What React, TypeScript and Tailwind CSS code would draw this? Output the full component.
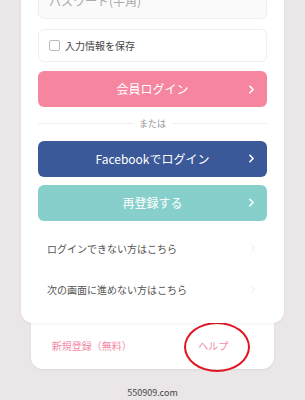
import { ChevronRight } from 'lucide-react';

const jp = { fontFamily: '"Noto Sans CJK JP", "Noto Sans", sans-serif' };

function ActionButton({ label, color }: { label: string; color: string }) {
  return (
    <button className={`relative flex h-[36px] w-full items-center justify-center rounded-[6px] text-[12px] text-white ${color}`}>
      {label}
      <ChevronRight className="absolute right-[9px] h-[13px] w-[13px]" strokeWidth={3} />
    </button>
  );
}

function LinkRow({ label }: { label: string }) {
  return (
    <div className="flex h-[41px] items-center justify-between pl-[9px] pr-[8px] text-[10px] text-[#555]">
      <span>{label}</span>
      <ChevronRight className="h-[12px] w-[12px] text-[#ddd]" strokeWidth={1.5} />
    </div>
  );
}

export default function App() {
  return (
    <div className="relative h-[400px] overflow-hidden bg-[#ebe7e8]" style={jp}>
      {/* Login card */}
      <div className="relative z-10 mx-[21px] -mt-[30px] rounded-b-[12px] bg-white px-[17px] pt-[13px] pb-[13px] shadow-[0_1px_3px_rgba(0,0,0,0.06)]">
        <div className="flex h-[36px] items-center rounded-[6px] border border-[#eee] bg-[#fafafa] px-[10px] text-[12px] text-[#aaa]">
          パスワード(半角)
        </div>

        <label className="mt-[10px] flex h-[33px] items-center gap-[5px] rounded-[6px] border border-[#eee] px-[10px] text-[10px] text-[#444]">
          <span className="h-[11px] w-[11px] rounded-[2px] border border-[#bbb] bg-white" />
          入力情報を保存
        </label>

        <div className="mt-[9px]">
          <ActionButton label="会員ログイン" color="bg-[#f6869f]" />
        </div>

        <div className="my-[10px] flex items-center gap-[6px] text-[9px] text-[#999]">
          <div className="h-px flex-1 bg-[#eee]" />
          <span>または</span>
          <div className="h-px flex-1 bg-[#eee]" />
        </div>

        <div className="flex flex-col gap-[8px]">
          <ActionButton label="Facebookでログイン" color="bg-[#3b5998]" />
          <ActionButton label="再登録する" color="bg-[#87cfcb]" />
        </div>

        <div className="mt-[7px]">
          <LinkRow label="ログインできない方はこちら" />
          <LinkRow label="次の画面に進めない方はこちら" />
        </div>
      </div>

      {/* Sub links */}
      <div className="relative mx-[31px] -mt-[14px] grid grid-cols-2 rounded-b-[12px] bg-white pt-[14px] shadow-[0_1px_3px_rgba(0,0,0,0.06)]">
        <div className="flex h-[46px] items-center justify-center text-[10px] text-[#f28aa5]">新規登録（無料）</div>
        <div className="relative flex h-[46px] items-center justify-center text-[10px] text-[#f28aa5]">
          ヘルプ
          <span className="absolute left-[31px] top-[-1px] h-[50px] w-[66px] rounded-[50%] border-[2px] border-[#e0151f]" />
        </div>
      </div>

      <div className="mt-[17px] text-center text-[9px] text-[#444]">550909.com</div>
    </div>
  );
}
